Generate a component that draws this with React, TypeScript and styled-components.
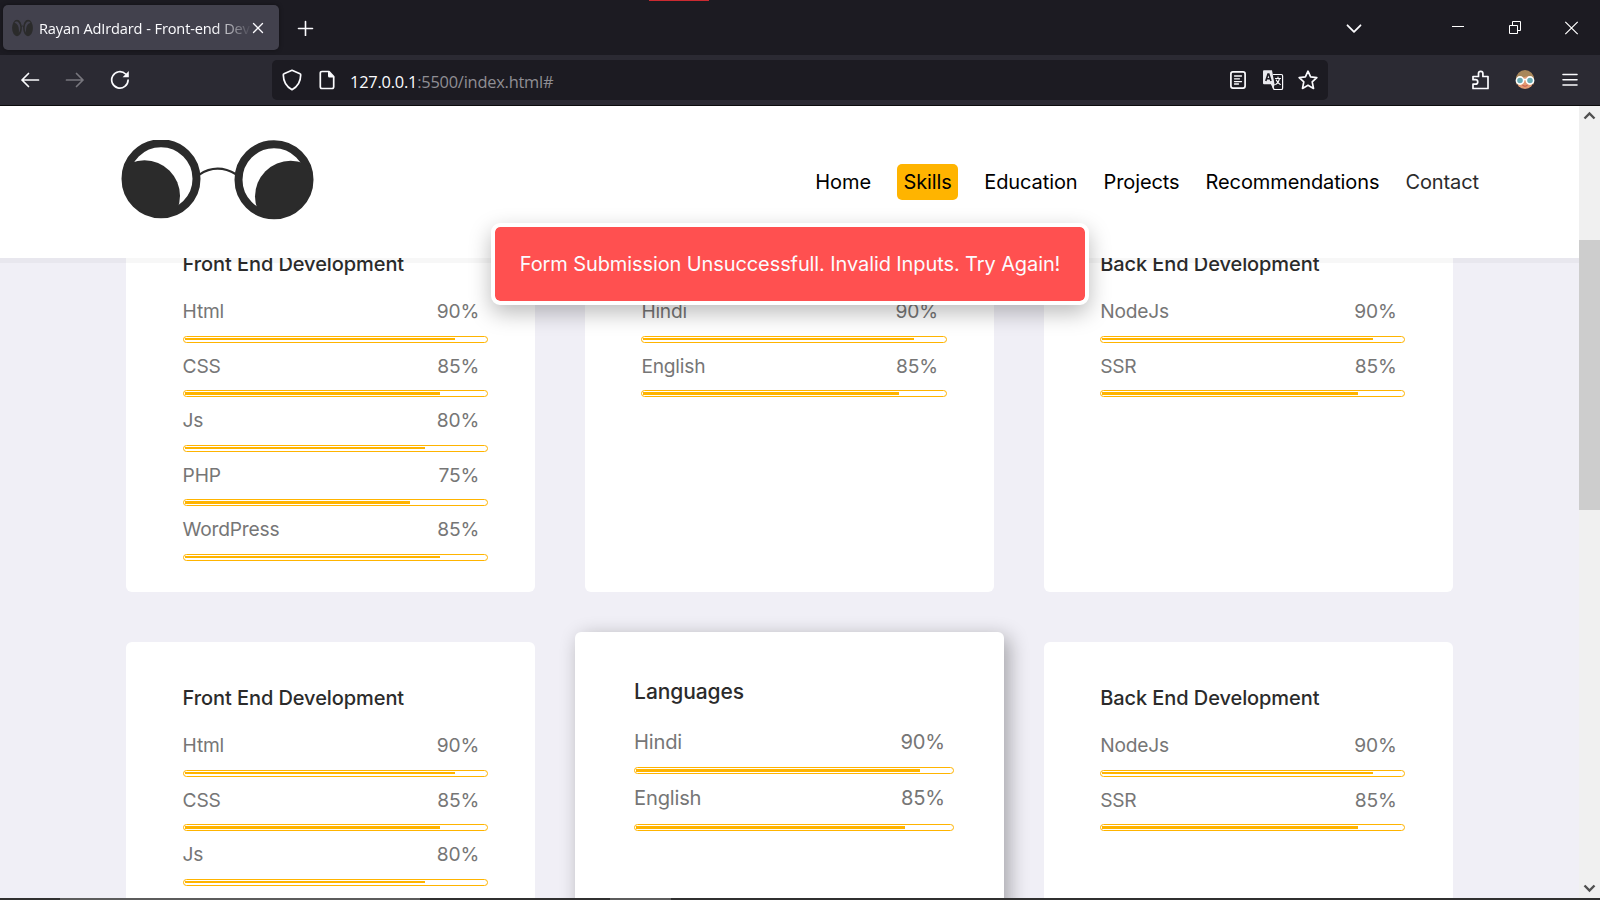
import React from "react";
import styled, { createGlobalStyle } from "styled-components";

const Global = createGlobalStyle`
  * { box-sizing: border-box; }
  body { margin: 0; background: #fff; overflow: hidden; }
`;

const Window = styled.div`
  display: flex;
  flex-direction: column;
  position: relative;
  width: 1600px;
  height: 900px;
  overflow: hidden;
  font-family: "Open Sans", "Noto Sans", sans-serif;
  color: #fbfbfe;
`;

const TabStrip = styled.div`
  display: flex;
  align-items: center;
  flex: none;
  height: 55px;
  background: #1c1b22;
  svg { flex: none; }
`;

const LoadingMark = styled.div`
  position: absolute;
  top: 0;
  left: 649px;
  width: 60px;
  height: 1px;
  background: #cb2a31;
`;

const Tab = styled.div`
  display: flex;
  align-items: center;
  width: 276px;
  height: 45px;
  margin-left: 3px;
  padding: 0 13px 0 9px;
  border-radius: 5px;
  background: #42414d;
  box-shadow: 0 0 4px rgba(0, 0, 0, 0.4);
`;

const TabTitle = styled.div`
  width: 211px;
  margin: 0 2px 0 6px;
  overflow: hidden;
  white-space: nowrap;
  font-size: 14.6px;
  letter-spacing: -0.16px;
  word-spacing: 0.2px;
  mask-image: linear-gradient(to right, #000 175px, transparent 213px);
`;

const NewTab = styled.div`
  display: flex;
  margin-left: 18px;
`;

const WindowControls = styled.div`
  display: flex;
  align-items: center;
  margin-left: auto;
`;

const Toolbar = styled.div`
  display: flex;
  align-items: center;
  flex: none;
  height: 51px;
  background: #2b2a33;
  border-bottom: 1px solid #0c0c0d;
  svg { flex: none; }
`;

const NavButtons = styled.div`
  display: flex;
  gap: 25px;
  width: 272px;
  padding-left: 20px;
`;

const AddressBar = styled.div`
  display: flex;
  align-items: center;
  width: 1056px;
  height: 40px;
  padding: 0 10px 0 10px;
  border-radius: 5px;
  background: #1c1b22;
`;

const Address = styled.div`
  flex: 1;
  margin: 3px 0 0 16px;
  font-size: 16.4px;
  letter-spacing: -0.22px;
  color: #8f8e94;
  span { color: #fbfbfe; }
`;

const AddressIcons = styled.div`
  display: flex;
  align-items: center;
  gap: 14.5px;
`;

const ToolbarIcons = styled.div`
  display: flex;
  align-items: center;
  gap: 24px;
  margin-left: auto;
  padding-right: 20px;
  svg:last-child { margin-left: 1px; }
`;

const Viewport = styled.div`
  display: flex;
  flex: 1;
  min-height: 0;
`;

const Page = styled.main`
  position: relative;
  flex: 1;
  overflow: hidden;
  background: #f0eff6;
  font-family: Inter, sans-serif;
`;

const Header = styled.header`
  position: relative;
  z-index: 2;
  display: flex;
  align-items: center;
  justify-content: space-between;
  height: 152px;
  padding: 0 100px 0 121px;
  background: #fff;
  box-shadow: 0 5px 0 rgba(0, 0, 0, 0.03);
`;

const Logo = styled.svg`
  margin-top: -5px;
`;

const Nav = styled.nav`
  display: flex;
  align-items: center;
  gap: 26px;
`;

const NavLink = styled.a<{ $active?: boolean; $muted?: boolean }>`
  padding: ${(p) => (p.$active ? "0 6.5px" : "0")};
  line-height: 36px;
  border-radius: 5px;
  background: ${(p) => (p.$active ? "#ffb400" : "transparent")};
  color: ${(p) => (p.$muted ? "#2b2b2b" : "#000")};
  font-size: 20px;
  letter-spacing: -0.1px;
`;

const Toast = styled.div`
  position: absolute;
  z-index: 3;
  top: 117px;
  left: 491px;
  display: flex;
  align-items: center;
  justify-content: center;
  width: 598px;
  height: 82px;
  border: 4px solid #fff;
  border-radius: 9px;
  background: #ff5050;
  background-clip: padding-box;
  box-shadow: 0 8px 22px rgba(0, 0, 0, 0.27);
  font-size: 20px;
  letter-spacing: -0.1px;
  white-space: nowrap;
`;

const SkillGrid = styled.section`
  display: grid;
  grid-template-columns: repeat(3, 408.79px);
  grid-auto-rows: 384px;
  gap: 50px;
  margin: -50px 0 0 126.32px;
`;

const CardTitle = styled.h3`
  margin: 0 0 16px;
  font-size: 20px;
  line-height: 26px;
  letter-spacing: -0.08px;
  font-weight: 500;
  color: #2b2b2b;
`;

const Skill = styled.div`
  width: 305.2px;
  height: 54.4px;
`;

const SkillLabel = styled.div`
  display: flex;
  justify-content: space-between;
  height: 43px;
  padding: 0.4px 8.8px 0 0;
  font-size: 19.2px;
  line-height: 37px;
  letter-spacing: -0.22px;
  color: #767676;
`;

const Track = styled.div`
  height: 7px;
  padding: 1px;
  border: 1px solid #ffb400;
  border-radius: 4px;
`;

const Fill = styled.div`
  height: 2.4px;
  background: #ffb400;
`;

const Card = styled.article`
  padding: 43px 0 0 56.3px;
  border-radius: 6px;
  background: #fff;
`;

const RaisedCard = styled(Card)`
  position: relative;
  margin: -10px;
  padding: 45.5px 0 0 59px;
  box-shadow: 5px 5px 20px rgba(0, 0, 0, 0.32);

  ${CardTitle} {
    margin-bottom: 17px;
    font-size: 21px;
    line-height: 27.5px;
  }
  ${Skill} {
    width: 320px;
    height: 56.4px;
  }
  ${SkillLabel} {
    height: 45.2px;
    padding: 0 9.2px 0 0;
    font-size: 20.16px;
    line-height: 39px;
  }
  ${Fill} {
    height: 3px;
  }
`;

const Scrollbar = styled.div`
  display: flex;
  flex-direction: column;
  align-items: center;
  width: 21px;
  padding: 5px 0;
  background: #f0f0f0;
`;

const Thumb = styled.div`
  width: 21px;
  height: 270px;
  margin: 120px 0 auto;
  background: #cdcdcd;
`;

const Taskbar = styled.div`
  display: flex;
  flex: none;
  height: 2px;
  background: #303030;
`;

const TaskSegment = styled.div<{ $start: number; $width: number }>`
  width: ${(p) => p.$width}px;
  margin-left: ${(p) => p.$start}px;
  background: #5c5c5c;
`;

const line = { fill: "none", stroke: "#fbfbfe", strokeLinecap: "round", strokeLinejoin: "round" } as const;

type SkillItem = [string, number];
const frontEnd: SkillItem[] = [["Html", 90], ["CSS", 85], ["Js", 80], ["PHP", 75], ["WordPress", 85]];
const languages: SkillItem[] = [["Hindi", 90], ["English", 85]];
const backEnd: SkillItem[] = [["NodeJs", 90], ["SSR", 85]];

function SkillCard({ title, skills, raised }: { title: string; skills: SkillItem[]; raised?: boolean }) {
  const Frame = raised ? RaisedCard : Card;
  const pxPerPercent = raised ? 3.158 : 3.005;
  return (
    <Frame>
      <CardTitle>{title}</CardTitle>
      {skills.map(([name, value]) => (
        <Skill key={name}>
          <SkillLabel><span>{name}</span><span>{value}%</span></SkillLabel>
          <Track><Fill style={{ width: value * pxPerPercent }} /></Track>
        </Skill>
      ))}
    </Frame>
  );
}

export default function App() {
  return (
    <Window>
      <Global />
      <TabStrip>
        <LoadingMark />
        <Tab>
          <svg width="21" height="18" viewBox="0 0 21 18">
            <g fill="#2b2b2b">
              <ellipse cx="5" cy="9" rx="4.9" ry="8.3" />
              <ellipse cx="16" cy="9" rx="4.9" ry="8.3" />
            </g>
            <path d="M2.500 4C4 1 8 3 8.300 8c.2 3-.8 5-1.500 6C7.500 9 6 4.500 2.500 4ZM18.500 4C17 1 13 3 12.700 8c-.2 3 .8 5 1.500 6C13.500 9 15 4.500 18.500 4Z" fill="#42414d" />
            <path d="M9 8q1.500-2 3 0" fill="none" stroke="#2b2b2b" />
          </svg>
          <TabTitle>Rayan AdIrdard - Front-end Developer</TabTitle>
          <svg width="12" height="12" viewBox="0 0 12 12"><path d="M1.500 1.500l9 9m0-9l-9 9" {...line} strokeWidth="1.300" /></svg>
        </Tab>
        <NewTab>
          <svg width="17" height="17" viewBox="0 0 17 17"><path d="M8.500 2.500v14M1.500 9.500h14" {...line} strokeWidth="1.600" /></svg>
        </NewTab>
        <WindowControls>
          <svg width="254" height="20" viewBox="1346 17 254 20">
            <path d="M1347.500 24.300l6.500 6.500 6.500-6.500" {...line} strokeWidth="1.800" />
            <path d="M1452 25.500h12" fill="none" stroke="#fff" />
            <path d="M1509.500 24.500h8v8h-8zM1512.500 24v-3.500h8v9h-3" fill="none" stroke="#fff" />
            <path d="M1565.300 20.800l12.400 12.400m0-12.400l-12.400 12.400" fill="none" stroke="#fff" strokeWidth="1.200" />
          </svg>
        </WindowControls>
      </TabStrip>
      <Toolbar>
        <NavButtons>
          <svg width="20" height="20" viewBox="0 0 20 20"><path d="M18.500 10H2m6.500-6.500L2 10l6.500 6.500" {...line} strokeWidth="1.700" /></svg>
          <svg width="20" height="20" viewBox="0 0 20 20"><path d="M1.500 10H18m-6.500-6.500L18 10l-6.500 6.500" {...line} stroke="#77767d" strokeWidth="1.700" /></svg>
          <svg width="20" height="20" viewBox="0 0 20 20">
            <path d="M18.100 10A8.200 8.200 0 1 1 15.600 4" {...line} strokeWidth="1.700" />
            <path d="M18.800 1v6.200h-6.200z" fill="#fbfbfe" />
          </svg>
        </NavButtons>
        <AddressBar>
          <svg width="20" height="22" viewBox="0 0 20 22"><path d="M10 1.300L18 4.700Q18.800 5 18.700 6C18.600 13 16 17.500 10 20.700 4 17.500 1.400 13 1.300 6Q1.200 5 2 4.700Z" {...line} strokeWidth="1.700" /></svg>
          <svg width="16" height="20" viewBox="-1 0 16 20" overflow="visible" style={{ marginLeft: 16 }}>
            <path d="M10 1.500H3Q1.300 1.500 1.300 3.200V16.800Q1.300 18.500 3 18.500H13Q14.700 18.500 14.700 16.800V6.500Z" {...line} strokeWidth="1.700" />
            <path d="M9 1l6.500 6.500H10.500Q9 7.500 9 6z" fill="#fbfbfe" />
          </svg>
          <Address><span>127.0.0.1</span>:5500/index.html#</Address>
          <AddressIcons>
            <svg width="18" height="20" viewBox="0 0 18 20">
              <rect x="1.900" y="1.900" width="14.200" height="16.200" rx="2" {...line} strokeWidth="1.700" />
              <path d="M5.500 6h7M5.500 8.800h5M5.500 11.600h7M5.500 14h4" {...line} strokeWidth="1.300" />
            </svg>
            <svg width="22" height="22" viewBox="0 0 22 22">
              <path d="M2 1.300h8l2.500 14H2Q1 15.300 1 14.300v-12Q1 1.300 2 1.300Z" fill="#e9e9ee" />
              <path d="M3.800 12L6 5h.8L9 12M4.500 9.800h3.800" fill="none" stroke="#1c1b22" strokeWidth="1.600" />
              <path d="M11.500 5.500H19.300Q20.600 5.500 20.600 6.800V19.200Q20.600 20.500 19.300 20.500H12L10 15.300" {...line} strokeWidth="1.200" />
              <path d="M13.500 9.500h5M16 8v1.500M17.500 9.500q-1 4.500-3.800 6M14.300 11q1.500 3.500 4 4.500" {...line} strokeWidth="1.100" />
              <path d="M9 15h4l-2 5z" fill="#e9e9ee" />
            </svg>
            <svg width="20" height="20" viewBox="0 0 20 20"><path d="M10 1.200l2.600 5.700 6.200.7-4.600 4.200 1.300 6.600L10 15.300l-5.500 3.100 1.300-6.600L1.200 7.600l6.200-.7z" {...line} strokeWidth="1.700" /></svg>
          </AddressIcons>
        </AddressBar>
        <ToolbarIcons>
          <svg width="20" height="20" viewBox="0 0 20 20"><path d="M2 18.500V14.200H4.500a2.200 2.200 0 0 0 0-4.500H2V6.500H7.500V3.500a2.200 2.200 0 0 1 4.400 0v3H17V18.500Z" {...line} strokeWidth="1.700" /></svg>
          <svg width="20" height="20" viewBox="0 0 20 20">
            <circle cx="10" cy="10" r="9" fill="#e19a70" />
            <path d="M1 15V9a9 9 0 0 1 18 0v6l-3-5L14 6 5 8z" fill="#a8875a" />
            <path d="M5 14l5-3 5 3-1 4H6z" fill="#e39a72" />
            <path d="M7.500 15.500q2.500 1.500 5 0" fill="none" stroke="#c6534a" />
            <circle cx="5" cy="10.500" r="3.600" fill="#69aab3" stroke="#fff" strokeWidth="1.600" />
            <circle cx="15" cy="10.500" r="3.600" fill="#69aab3" stroke="#fff" strokeWidth="1.600" />
            <path d="M8.300 9.500h3.400" stroke="#fff" strokeWidth="1.600" />
          </svg>
          <svg width="20" height="20" viewBox="0 0 20 20"><path d="M3 4.500h14M3 9.700h14M3 15h14" {...line} strokeWidth="1.600" /></svg>
        </ToolbarIcons>
      </Toolbar>
      <Viewport>
        <Page>
          <Header>
            <Logo width="193" height="80" viewBox="0 0.2 193 80">
              <defs>
                <clipPath id="left"><circle cx="40" cy="39" r="37" /></clipPath>
                <clipPath id="right"><circle cx="153" cy="40" r="37" /></clipPath>
              </defs>
              <g fill="none" stroke="#2b2b2b">
                <circle cx="40" cy="39" r="35.500" strokeWidth="8" />
                <circle cx="153" cy="40" r="35.500" strokeWidth="8" />
                <path d="M78 35Q96 23 115 34.500" strokeWidth="2.200" />
              </g>
              <circle cx="23.500" cy="56" r="35.500" fill="#2b2b2b" clipPath="url(#left)" />
              <circle cx="169.700" cy="56.700" r="35.700" fill="#2b2b2b" clipPath="url(#right)" />
            </Logo>
            <Nav>
              <NavLink>Home</NavLink>
              <NavLink $active>Skills</NavLink>
              <NavLink>Education</NavLink>
              <NavLink>Projects</NavLink>
              <NavLink>Recommendations</NavLink>
              <NavLink $muted>Contact</NavLink>
            </Nav>
          </Header>
          <SkillGrid>
            <SkillCard title="Front End Development" skills={frontEnd} />
            <SkillCard title="Languages" skills={languages} />
            <SkillCard title="Back End Development" skills={backEnd} />
            <SkillCard title="Front End Development" skills={frontEnd} />
            <SkillCard title="Languages" skills={languages} raised />
            <SkillCard title="Back End Development" skills={backEnd} />
          </SkillGrid>
          <Toast>Form Submission Unsuccessfull. Invalid Inputs. Try Again!</Toast>
        </Page>
        <Scrollbar>
          <svg width="13" height="9" viewBox="0 0 13 9"><path d="M1.500 7.500l5-5 5 5" fill="none" stroke="#505050" strokeWidth="2.400" /></svg>
          <Thumb />
          <svg width="13" height="9" viewBox="0 0 13 9"><path d="M1.500 1.500l5 5 5-5" fill="none" stroke="#505050" strokeWidth="2.400" /></svg>
        </Scrollbar>
      </Viewport>
      <Taskbar>
        <TaskSegment $start={60} $width={360} />
        <TaskSegment $start={190} $width={61} />
      </Taskbar>
    </Window>
  );
}
